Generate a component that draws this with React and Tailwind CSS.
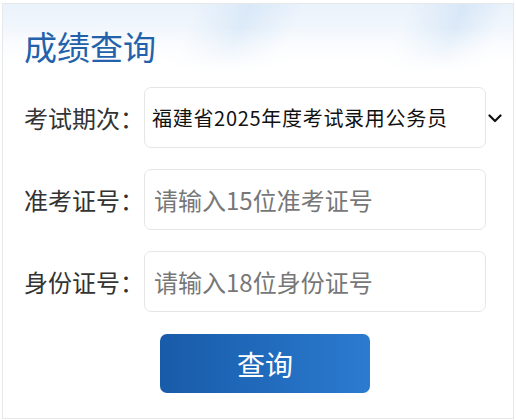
import React from 'react';

const font = { fontFamily: '"Noto Sans CJK SC", "Noto Sans", sans-serif' };

function Row({ label, children, after }) {
  return (
    <div className="flex items-center">
      <div className="w-[120px] shrink-0 text-[24px] leading-none text-[#333]">{label}</div>
      <div className="w-[342px] h-[61px] shrink-0 flex items-center border border-[#e6e6e6] rounded-[7px] bg-white">
        {children}
      </div>
      {after}
    </div>
  );
}

export default function App() {
  return (
    <div className="w-[516px] h-[420px] bg-white pt-[3px] pl-[2px]" style={font}>
      <div className="w-[512px] h-[416px] border border-[#e6e9ec] bg-white flex flex-col">
        <div className="h-[67px] pl-[21px] pt-[22px] bg-[linear-gradient(to_bottom,rgba(255,255,255,0)_35%,#ffffff_100%),linear-gradient(112deg,transparent_36%,rgba(200,222,244,0.5)_46%,transparent_56%,transparent_76%,rgba(200,222,244,0.55)_86%,transparent_94%),linear-gradient(to_bottom,#eaf2fb,#ffffff)]">
          <h1 className="text-[33px] leading-[40px] text-[#2361ab] font-normal">成绩查询</h1>
        </div>

        <div className="mt-[16px] pl-[21px] flex flex-col gap-[21px]">
          <Row
            label="考试期次："
            after={
              <svg className="ml-[2px] mt-[2px]" width="14" height="9" viewBox="0 0 14 9" fill="none">
                <path d="M1.5 1.5l5.5 5.5 5.5-5.5" stroke="#111" strokeWidth="2.2" strokeLinecap="round" strokeLinejoin="round" />
              </svg>
            }
          >
            <span className="pl-[7px] text-[20px] tracking-[0.7px] text-[#111] leading-none">福建省2025年度考试录用公务员</span>
          </Row>
          <Row label="准考证号：">
            <input
              className="w-full h-full pl-[9px] bg-transparent outline-none text-[24px] text-[#333] placeholder:text-[#777]"
              placeholder="请输入15位准考证号"
              style={font}
            />
          </Row>
          <Row label="身份证号：">
            <input
              className="w-full h-full pl-[9px] bg-transparent outline-none text-[24px] text-[#333] placeholder:text-[#777]"
              placeholder="请输入18位身份证号"
              style={font}
            />
          </Row>
        </div>

        <div className="mt-[22px] pl-[157px]">
          <button
            className="w-[210px] h-[59px] rounded-[7px] bg-linear-to-r from-[#185ba9] to-[#2b7bd0] text-white text-[28px] leading-none"
            style={font}
          >
            查询
          </button>
        </div>
      </div>
    </div>
  );
}
